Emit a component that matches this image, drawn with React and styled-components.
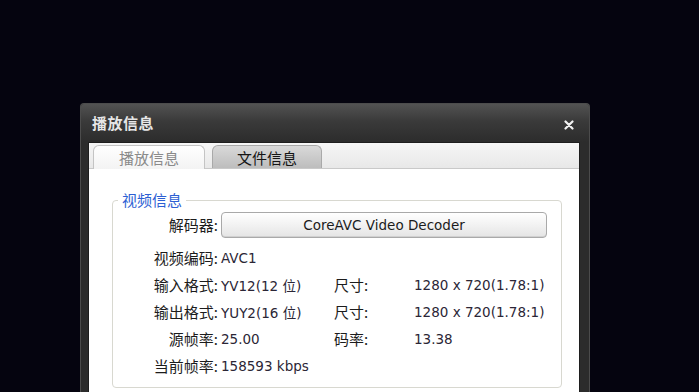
import styled, { createGlobalStyle } from 'styled-components';

const GlobalStyle = createGlobalStyle`
  html, body {
    margin: 0;
    background: #05040f;
    overflow: hidden;
  }
  body {
    font-family: "Noto Sans CJK SC", sans-serif;
  }
`;

const Screen = styled.div`
  height: 392px;
  padding: 103px 0 0 80px;
  box-sizing: border-box;
`;

const Dialog = styled.div`
  width: 510px;
  height: 289px;
  box-sizing: border-box;
  background: #2c2c2c;
  border: 1px solid #4c4c4c;
  border-bottom: none;
  border-radius: 4px 4px 0 0;
  display: flex;
  flex-direction: column;
`;

const TitleBar = styled.div`
  height: 36px;
  flex: none;
  display: flex;
  align-items: center;
  justify-content: space-between;
  padding: 0 15px 2px 11px;
  background: linear-gradient(#525252, #3a3a3a 45%, #2c2c2c);
  border-radius: 3px 3px 0 0;
`;

const Title = styled.div`
  font-size: 15px;
  font-weight: bold;
  color: #e6e6e6;
  letter-spacing: 0.5px;
`;

const Close = styled.svg`
  width: 10px;
  height: 10px;
  margin-top: 6px;
`;

const Body = styled.div`
  flex: 1;
  padding: 0 9px 0 7px;
  display: flex;
`;

const Panel = styled.div`
  flex: 1;
  background: #fff;
  border: 1px solid #1e1e1e;
  border-bottom: none;
`;

const TabStrip = styled.div`
  height: 25px;
  display: flex;
  align-items: flex-end;
  gap: 7px;
  padding-left: 4px;
  background: linear-gradient(#f6f6f6, #e8e8e8);
  border-bottom: 1px solid #c9c9c9;
`;

const Tab = styled.div`
  width: ${p => p.$w}px;
  box-sizing: border-box;
  display: flex;
  align-items: center;
  justify-content: center;
  font-size: 15px;
  border: 1px solid ${p => (p.$active ? '#c4c4c4' : '#a9a9a9')};
  border-bottom: none;
  border-radius: 6px 6px 0 0;
  color: ${p => (p.$active ? '#8a8a8a' : '#151515')};
  background: ${p =>
    p.$active
      ? 'linear-gradient(#ffffff, #f3f3f3)'
      : 'linear-gradient(#d9d9d9, #bdbdbd)'};
  margin-bottom: ${p => (p.$active ? '-1px' : '0')};
  height: ${p => (p.$active ? '24px' : '23px')};
`;

const Content = styled.div`
  padding: 21px 17px 0 23px;
`;

const Group = styled.fieldset`
  margin: 0;
  padding: 2px 14px 8px 0;
  border: 1px solid #d8d8d0;
  border-radius: 4px;
  min-width: 0;
`;

const Legend = styled.legend`
  margin-left: 5px;
  padding: 0 4px;
  font-size: 15px;
  color: #2d5fd3;
  line-height: 20px;
`;

const Grid = styled.div`
  display: grid;
  grid-template-columns: 105px 110px 77px 1fr;
  grid-template-rows: 32px;
  grid-auto-rows: 27px;
  column-gap: 3px;
  align-items: center;
`;

const Row = styled.div`
  display: contents;
`;

const Label = styled.div`
  font-size: 15px;
  color: #1c1c1c;
  text-align: ${p => (p.$left ? 'left' : 'right')};
  white-space: nowrap;
  align-self: ${p => (p.$top ? 'start' : 'center')};
  line-height: ${p => (p.$top ? '26px' : 'normal')};
`;

const Value = styled.div`
  font-family: "DejaVu Sans", "Noto Sans CJK SC", sans-serif;
  font-size: 13.5px;
  color: #2b2636;
  white-space: nowrap;
`;

const DecoderButton = styled.div`
  grid-column: 2 / 5;
  align-self: start;
  height: 26px;
  box-sizing: border-box;
  display: flex;
  align-items: center;
  justify-content: center;
  border: 1px solid #a9a9a9;
  border-radius: 4px;
  background: linear-gradient(#ffffff, #f2f2f2 50%, #e4e4e4);
  box-shadow: inset 0 -1px 0 #d0d0d0;
  font-family: "DejaVu Sans", sans-serif;
  font-size: 13.5px;
  color: #1c1c1c;
`;

const rows = [
  ['视频编码:', 'AVC1'],
  ['输入格式:', 'YV12(12 位)', '尺寸:', '1280 x 720(1.78:1)'],
  ['输出格式:', 'YUY2(16 位)', '尺寸:', '1280 x 720(1.78:1)'],
  ['源帧率:', '25.00', '码率:', '13.38'],
  ['当前帧率:', '158593 kbps'],
];

export default function App() {
  return (
    <>
      <GlobalStyle />
      <Screen>
        <Dialog>
          <TitleBar>
            <Title>播放信息</Title>
            <Close viewBox="0 0 10 10">
              <path d="M1.5 1.5 L8.5 8.5 M8.5 1.5 L1.5 8.5" stroke="#f2f2f2" strokeWidth="2.2" strokeLinecap="round" />
            </Close>
          </TitleBar>
          <Body>
            <Panel>
              <TabStrip>
                <Tab $active $w={112}>播放信息</Tab>
                <Tab $w={110}>文件信息</Tab>
              </TabStrip>
              <Content>
                <Group>
                  <Legend>视频信息</Legend>
                  <Grid>
                    <Row>
                      <Label $top>解码器:</Label>
                      <DecoderButton>CoreAVC Video Decoder</DecoderButton>
                    </Row>
                    {rows.map(([l1, v1, l2, v2]) => (
                      <Row key={l1}>
                        <Label>{l1}</Label>
                        <Value>{v1}</Value>
                        <Label $left>{l2 || ''}</Label>
                        <Value>{v2 || ''}</Value>
                      </Row>
                    ))}
                  </Grid>
                </Group>
              </Content>
            </Panel>
          </Body>
        </Dialog>
      </Screen>
    </>
  );
}
